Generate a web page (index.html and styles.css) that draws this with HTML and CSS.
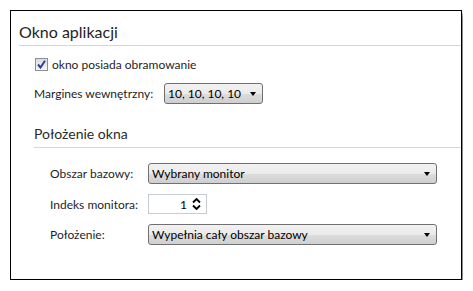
FILE: index.html
```html
<!DOCTYPE html>
<html lang="pl">

<head>
  <meta charset="UTF-8">
  <meta name="viewport" content="width=device-width, initial-scale=1.0">
  <title>Okno aplikacji</title>
  <link rel="stylesheet" href="styles.css">
</head>

<body>
  <div class="window">
    <h1 class="title">Okno aplikacji</h1>

    <div class="section">
      <label class="check-row">
        <span class="checkbox">
          <svg width="9" height="9" viewBox="0 0 9 9">
            <path d="M1 4.5 L3.5 7.5 L8 0.8" fill="none" stroke="#2b3f9e" stroke-width="2" />
          </svg>
        </span>
        okno posiada obramowanie
      </label>

      <div class="row">
        <span class="label label-wide">Margines wewnętrzny:</span>
        <div class="select select-short">
          <span>10, 10, 10, 10</span>
          <span class="arrow"></span>
        </div>
      </div>
    </div>

    <h2 class="subtitle">Położenie okna</h2>

    <div class="grid">
      <span class="label">Obszar bazowy:</span>
      <div class="select">
        <span>Wybrany monitor</span>
        <span class="arrow"></span>
      </div>

      <span class="label">Indeks monitora:</span>
      <div class="spin">
        <span class="value">1</span>
        <svg class="spin-arrows" width="9" height="14" viewBox="0 0 9 14">
          <path d="M1 5.5 L4.5 2 L8 5.5" fill="none" stroke="#000" stroke-width="1.8" />
          <path d="M1 8.5 L4.5 12 L8 8.5" fill="none" stroke="#000" stroke-width="1.8" />
        </svg>
      </div>

      <span class="label">Położenie:</span>
      <div class="select">
        <span>Wypełnia cały obszar bazowy</span>
        <span class="arrow"></span>
      </div>
    </div>
  </div>
</body>

</html>
```

FILE: styles.css
```css
body {
  margin: 10px;
  background-color: #fff;
  font-family: "Lato", "Noto Sans", sans-serif;
  font-size: 12px;
  color: #1e1e1e;
}

.window {
  border: 1px solid #000;
  background-color: #fff;
  box-shadow: 3px 4px 5px rgba(0, 0, 0, 0.55);
  padding: 11px 0 0 8px;
  box-sizing: content-box;
  width: 442px;
  height: 257px;
}

.title {
  margin: 0;
  padding: 0 0 3px;
  font-size: 16px;
  font-weight: normal;
  line-height: 20px;
  border-bottom: 1px solid #d6d6d6;
}

.section {
  padding-left: 15px;
}

.check-row {
  display: flex;
  align-items: center;
  gap: 4px;
  height: 16px;
  margin-top: 10px;
}

.checkbox {
  display: flex;
  align-items: center;
  justify-content: center;
  width: 11px;
  height: 11px;
  border: 1px solid #8e8f8f;
  background: linear-gradient(#dcdcdc, #f6f6f6);
  margin-left: 1px;
}

.row {
  display: flex;
  align-items: center;
  margin-top: 11px;
}

.label-wide {
  width: 130px;
}

.select {
  display: flex;
  align-items: center;
  justify-content: space-between;
  height: 19px;
  padding: 0 6px 0 3px;
  border: 1px solid #707070;
  border-radius: 3px;
  background: linear-gradient(#f2f2f2 0%, #ebebeb 50%, #dddddd 51%, #cfcfcf 100%);
  color: #000;
}

.select-short {
  width: 88px;
}

.arrow {
  width: 0;
  height: 0;
  border-left: 3.5px solid transparent;
  border-right: 3.5px solid transparent;
  border-top: 4px solid #000;
}

.subtitle {
  margin: 21px 0 0 15px;
  padding: 0 0 4px;
  font-size: 14px;
  font-weight: normal;
  line-height: 18px;
  color: #2a2a2a;
  border-bottom: 1px solid #d6d6d6;
}

.grid {
  display: grid;
  grid-template-columns: 98px 289px;
  row-gap: 10px;
  align-items: center;
  margin: 15px 0 0 31px;
}

.grid .select {
  width: 278px;
}

.spin {
  display: flex;
  align-items: center;
  justify-content: flex-end;
  gap: 5px;
  width: 52px;
  height: 18px;
  padding-right: 5px;
  border: 1px solid #c6ccd3;
  background-color: #fff;
  color: #000;
}
```
